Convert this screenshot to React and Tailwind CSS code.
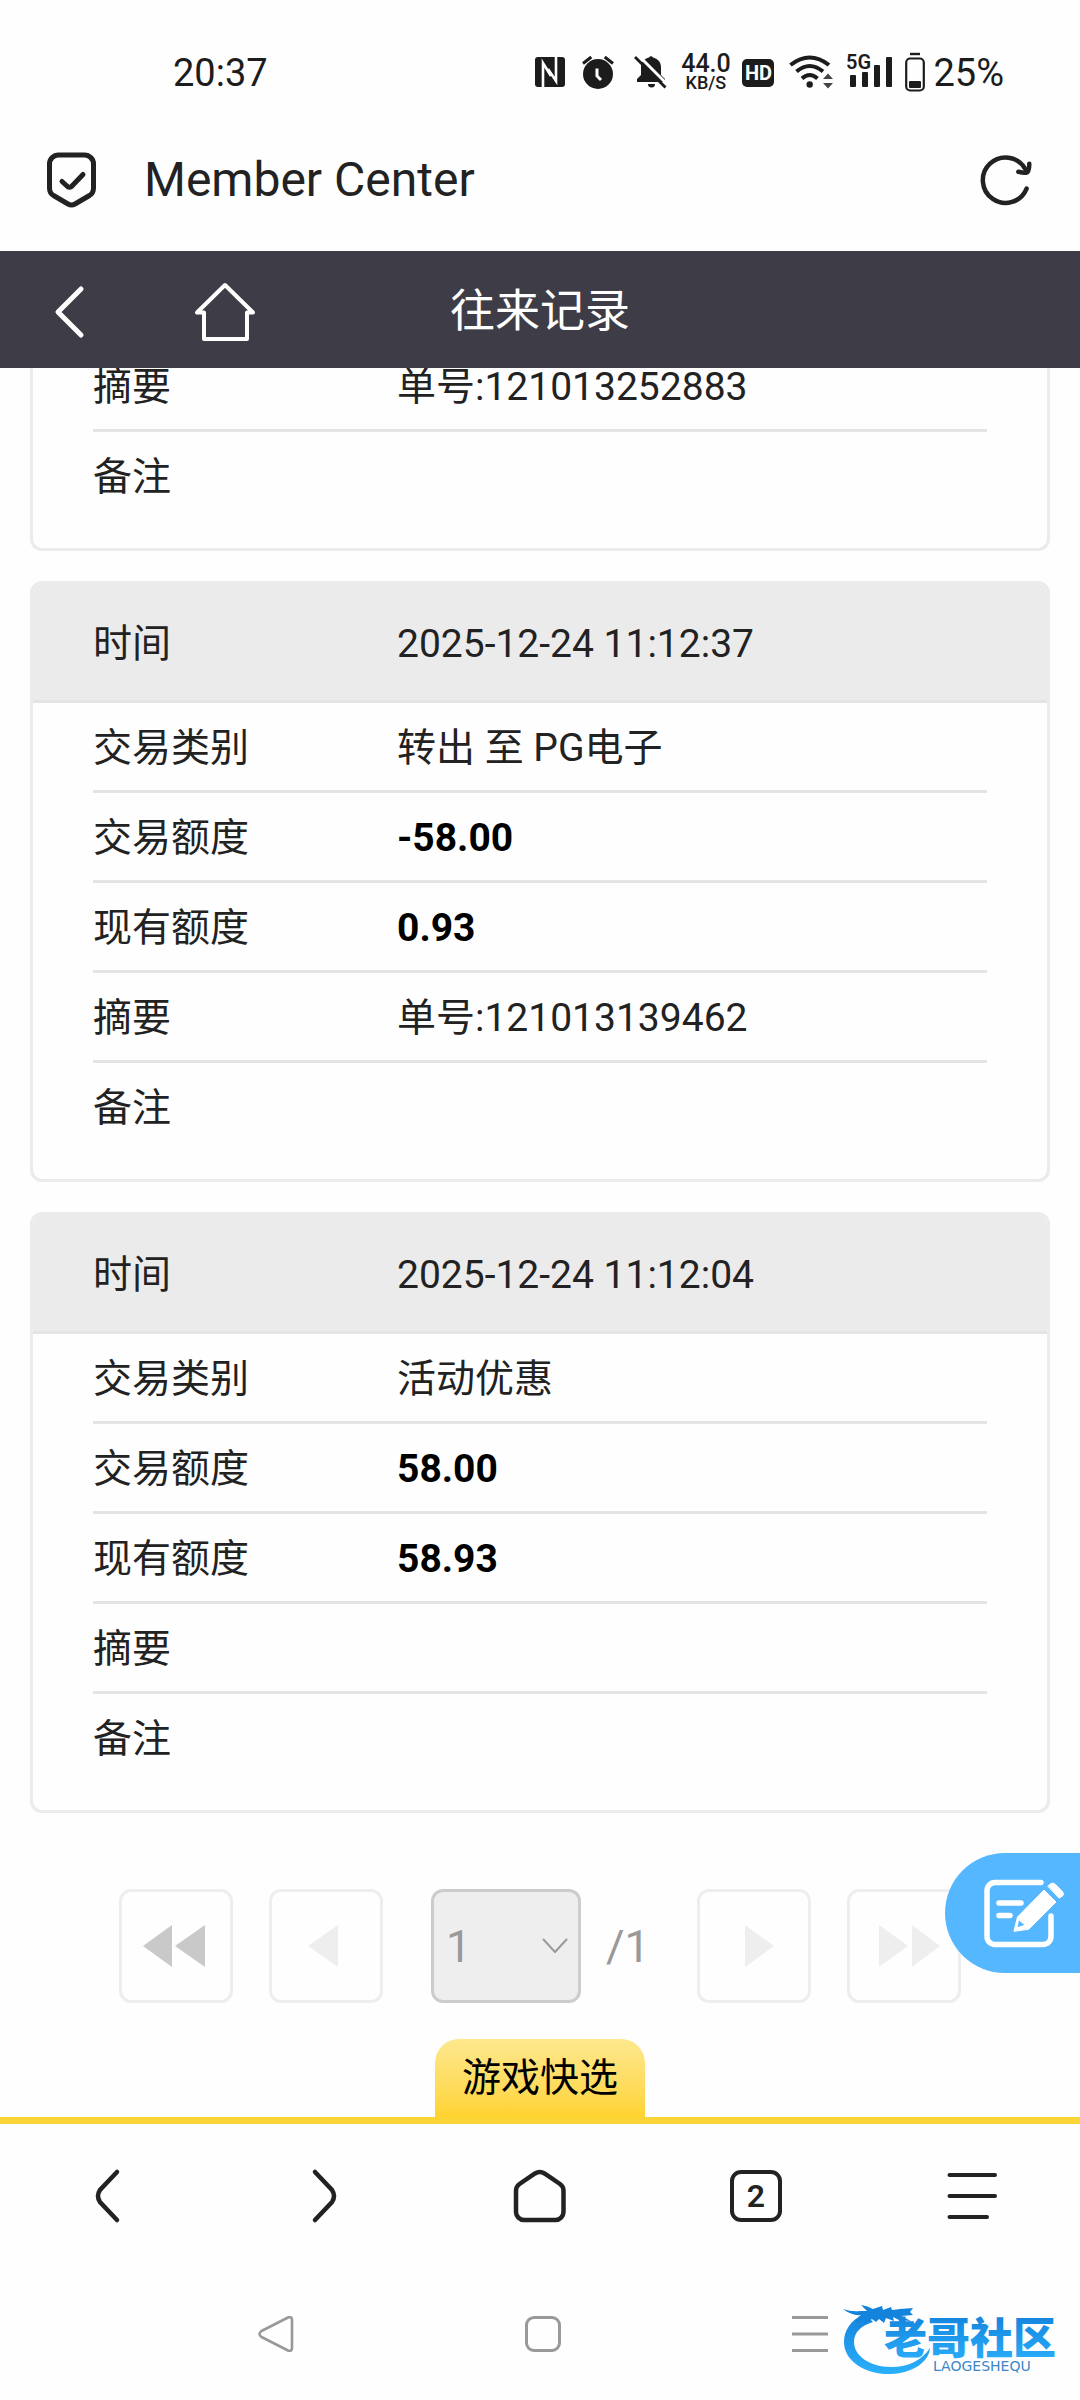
import React, { useState } from 'react';

const records = [
    { id: 1, rows: [{ label: '摘要', value: '单号:121013252883' }, { label: '备注', value: '' }] },
    {
        id: 2,
        time: '2025-12-24 11:12:37',
        rows: [
            { label: '交易类别', value: '转出 至 PG电子' },
            { label: '交易额度', value: '-58.00', bold: true },
            { label: '现有额度', value: '0.93', bold: true },
            { label: '摘要', value: '单号:121013139462' },
            { label: '备注', value: '' },
        ],
    },
    {
        id: 3,
        time: '2025-12-24 11:12:04',
        rows: [
            { label: '交易类别', value: '活动优惠' },
            { label: '交易额度', value: '58.00', bold: true },
            { label: '现有额度', value: '58.93', bold: true },
            { label: '摘要', value: '' },
            { label: '备注', value: '' },
        ],
    },
];

const StatusBar = () => (
    <div className="flex h-[108px] shrink-0 items-center justify-between pt-[38px] pl-[173px] pr-[76px] text-[38px] leading-none text-[#1c1c1c]">
        <span>20:37</span>
        <div className="flex items-center gap-3">
            {/* NFC */}
            <svg className="h-[44px] w-[34px]" viewBox="0 0 34 44" fill="none">
                <rect x="2" y="6" width="30" height="30" rx="3" fill="#1c1c1c" />
                <path d="M10 36V12L18 25M23 6v24l-8-12" stroke="#fff" strokeWidth="2.600" />
            </svg>
            {/* Alarm */}
            <svg className="h-[44px] w-[38px]" viewBox="0 0 38 44" fill="none" strokeWidth="3">
                <circle cx="19" cy="23" r="15" fill="#1c1c1c" />
                <path d="M4 12.500l8.300-6.500M34 12.500L25.700 6" stroke="#1c1c1c" />
                <path d="M18 17.500v7.500l4 4" stroke="#fff" />
            </svg>
            {/* Muted bell */}
            <svg className="h-[44px] w-[40px]" viewBox="0 0 40 44" fill="none">
                <path d="M8 31v-3l4-4v-8c0-5 3.500-8.500 8-9.500a2.300 2.300 0 0 1 4 0c4.500 1 8 4.500 8 9.500v8l4 4v3z" fill="#1c1c1c" />
                <path d="M19 33h7a3.500 3.500 0 0 1-7 0z" fill="#1c1c1c" />
                <path d="M9 4l31 31" stroke="#fff" strokeWidth="3" />
                <path d="M6 6l30.500 30.500" stroke="#1c1c1c" strokeWidth="2.800" />
            </svg>
            <div className="flex w-[49px] flex-col items-center font-medium">
                <span className="text-[25px] leading-[20px]">44.0</span>
                <span className="text-[18px] leading-[18px]">KB/S</span>
            </div>
            {/* HD */}
            <span className="flex h-[28px] w-[32px] items-center justify-center rounded-[5px] bg-[#1c1c1c] text-[20px] font-bold text-white">HD</span>
            {/* Wifi */}
            <svg className="h-[44px] w-[49px]" viewBox="0 0 49 44" fill="none" stroke="#1c1c1c" strokeWidth="4">
                <path d="M4.500 14Q23.700-1 43 14" />
                <path d="M10.500 20.500Q23.700 9.500 37 20.500" />
                <path d="M16 27.500Q23.700 20.500 31.500 27.500" />
                <circle cx="23.700" cy="33.500" r="3.200" fill="#1c1c1c" stroke="none" />
                <path d="M37 28l5-5.500 5 5.500zM37 32l5 5.500 5-5.500z" fill="#444" stroke="none" />
            </svg>
            {/* 5G signal */}
            <svg className="h-[44px] w-[46px]" viewBox="0 0 46 44" fill="#1c1c1c">
                <text x="-1" y="18" fontSize="20" fontWeight="600">5G</text>
                <rect x="3" y="24" width="6" height="12" rx="1" />
                <rect x="15" y="21" width="6" height="15" rx="1" />
                <rect x="27" y="14" width="6" height="22" rx="1" />
                <rect x="39" y="6" width="6" height="30" rx="1" />
            </svg>
            <div className="flex items-center gap-2">
                <svg className="h-[44px] w-[20px]" viewBox="0 0 20 44" fill="none">
                    <rect x="1.200" y="7.500" width="17.600" height="32" rx="4" stroke="#1c1c1c" strokeWidth="2.200" />
                    <path d="M5 3h10" stroke="#1c1c1c" strokeWidth="2.400" />
                    <rect x="4" y="30" width="12" height="7" rx="1" fill="#1c1c1c" />
                </svg>
                <span>25%</span>
            </div>
        </div>
    </div>
);

const BrowserBar = () => (
    <div className="flex h-[143px] shrink-0 items-center pl-[45px] pr-[45px] text-[#222]">
        <svg className="h-[60px] w-[54px]" viewBox="0 0 54 60" fill="none" stroke="currentColor" strokeWidth="5" strokeLinecap="round" strokeLinejoin="round">
            <path d="M13.500 5h26a9 9 0 0 1 9 9v24q0 5-4 7.500L30 54q-3.500 2-7 0L8.500 45.500q-4-2.500-4-7.500V14a9 9 0 0 1 9-9z" />
            <path d="M17 31.500l5.500 5q2 1.500 4 0L38 24.500" />
        </svg>
        <span className="ml-[45px] flex-1 text-[48px] leading-none">Member Center</span>
        <button aria-label="Reload">
            <svg className="block h-[60px] w-[60px]" viewBox="0 0 60 60" fill="none" stroke="currentColor" strokeWidth="4.500" strokeLinecap="round" strokeLinejoin="round">
                <path d="M51.600 38.700A22.700 22.700 0 1 1 50 18.500l2 3" />
                <path d="M54.300 13.700q0 8.500-3 9-3 .3-8-1" />
            </svg>
        </button>
    </div>
);

const PageHeader = () => (
    <header className="grid h-[117px] shrink-0 grid-cols-[1fr_auto_1fr] items-center bg-[#3e3d47] text-white">
        <div className="flex items-center gap-[103px] pl-[52px]">
            <button aria-label="返回">
                <svg className="block h-[60px] w-[36px]" viewBox="0 0 36 60" fill="none" stroke="currentColor" strokeWidth="5" strokeLinecap="round" strokeLinejoin="round">
                    <path d="M29 9L6 32l23 23" />
                </svg>
            </button>
            <a href="#home" aria-label="首页">
                <svg className="block h-[68px] w-[68px]" viewBox="0 0 68 68" fill="none" stroke="currentColor" strokeWidth="4" strokeLinejoin="round">
                    <path d="M34 9L6 36.500h7V63h43V36.500h6z" />
                </svg>
            </a>
        </div>
        <h1 className="pt-[3px] text-[45px] leading-none">往来记录</h1>
    </header>
);

const RecordCard = ({ record }) => (
    <dl className="overflow-hidden rounded-[12px] border-[3px] border-[#ebebeb] pb-[29px] text-[39px] leading-[44px] text-[#222]">
        {record.time && (
            <div className="flex h-[119px] items-center border-b-[3px] border-[#e4e4e4] bg-[#ebebeb] px-[60px] pt-[3px]">
                <dt className="w-[304px]">时间</dt>
                <dd>{record.time}</dd>
            </div>
        )}
        <div className="px-[60px]">
            {record.rows.map((row) => (
                <div key={row.label} className="flex h-[90px] items-center border-b-[3px] border-[#e4e4e4] pt-[3px] last:h-[87px] last:border-b-0">
                    <dt className="w-[304px]">{row.label}</dt>
                    <dd className={row.bold ? 'font-bold text-black' : ''}>{row.value}</dd>
                </div>
            ))}
        </div>
    </dl>
);

const PageButton = ({ label, dark, children }) => (
    <button
        aria-label={label}
        className={`flex h-[114px] w-[114px] items-center justify-center rounded-[12px] border-[3px] border-[#eee] ${dark ? 'text-[#c9c9c9]' : 'text-[#eee]'}`}
    >
        {children}
    </button>
);

const Pagination = () => {
    const [page, setPage] = useState('1');

    return (
        <nav className="mt-[76px] mb-[36px] flex items-center justify-center text-[45px] leading-none text-[#999]">
            <div className="flex gap-[36px]">
                <PageButton label="第一页" dark>
                    <svg className="h-[42px] w-[66px]" viewBox="0 0 66 42" fill="currentColor">
                        <path d="M0 21L29 0v42zM32 21L62 0v42z" />
                    </svg>
                </PageButton>
                <PageButton label="上一页">
                    <svg className="h-[42px] w-[36px]" viewBox="0 0 36 42" fill="currentColor">
                        <path d="M0 21L30 0v42z" />
                    </svg>
                </PageButton>
            </div>
            <div className="relative ml-[48px]">
                <select
                    aria-label="页码"
                    value={page}
                    onChange={(e) => setPage(e.target.value)}
                    className="block h-[114px] w-[150px] appearance-none rounded-[12px] border-[3px] border-[#ccc] bg-[#eee] pl-[12px]"
                >
                    <option value="1">1</option>
                </select>
                <svg className="pointer-events-none absolute top-[48px] right-[12px] h-[18px] w-[28px]" viewBox="0 0 28 18" fill="none" stroke="currentColor" strokeWidth="2">
                    <path d="M2 2l12 13L26 2" />
                </svg>
            </div>
            <span className="w-[116px] pl-[25px]">/1</span>
            <div className="flex gap-[36px]">
                <PageButton label="下一页">
                    <svg className="h-[42px] w-[40px]" viewBox="0 0 40 42" fill="currentColor">
                        <path d="M40 21L11 0v42z" />
                    </svg>
                </PageButton>
                <PageButton label="最后一页">
                    <svg className="h-[42px] w-[72px]" viewBox="0 0 72 42" fill="currentColor">
                        <path d="M40 21L11 0v42zM72 21L44 0v42z" />
                    </svg>
                </PageButton>
            </div>
        </nav>
    );
};

const BrowserNav = () => (
    <nav className="grid h-[144px] shrink-0 grid-cols-5 place-items-center text-[#222]">
        <button aria-label="Back">
            <svg className="block h-[60px] w-[60px]" viewBox="0 0 60 60" fill="none" stroke="currentColor" strokeWidth="4.500" strokeLinecap="round">
                <path d="M39 6L22 24Q18 30 22 36L39 54" />
            </svg>
        </button>
        <button aria-label="Forward">
            <svg className="block h-[60px] w-[60px]" viewBox="0 0 60 60" fill="none" stroke="currentColor" strokeWidth="4.500" strokeLinecap="round">
                <path d="M21 6L38 24Q42 30 38 36L21 54" />
            </svg>
        </button>
        <button aria-label="Home">
            <svg className="block h-[60px] w-[60px]" viewBox="0 0 60 60" fill="none" stroke="currentColor" strokeWidth="4.500">
                <path d="M25 7.500Q29.800 4.500 34.500 7.500L50 18Q53.500 20.500 53.500 24.500V46a8 8 0 0 1-8 8H14a8 8 0 0 1-8-8V24.500Q6 20.500 9.500 18z" />
            </svg>
        </button>
        <button className="flex h-[52px] w-[52px] items-center justify-center rounded-[11px] border-4 border-[#222] text-[32px] leading-none font-semibold">2</button>
        <button aria-label="Menu">
            <svg className="block h-[60px] w-[60px]" viewBox="0 0 60 60" fill="none" stroke="currentColor" strokeWidth="4" strokeLinecap="round">
                <path d="M7.500 9H53M7.500 30H53M7.500 51H45" />
            </svg>
        </button>
    </nav>
);

// Site logo: dragon ring with the name over it
const Watermark = () => (
    <svg className="absolute top-[34px] right-[9px] h-[84px] w-[228px]" viewBox="0 0 228 84">
        <defs>
            <linearGradient id="logo" x1="0" y1="0" x2="0" y2="1">
                <stop offset="0" stopColor="#1483dc" />
                <stop offset="1" stopColor="#2ab0fb" />
            </linearGradient>
        </defs>
        <path d="M22 12C7 18 1 29 1 40C1 60 24 73 48 72C70 71 86 60 87 46C79 58 66 65 48 65C27 65 11 54 11 40C11 31 17 24 30 20z" fill="url(#logo)" />
        <path d="M0 7q9 3 17 2l7 0-6-6q7 1 12 4l9-3 1 4 8-3 1 3 8-1 13-1-3 4 3 3-12 1 10 5-12-1-6-3 1 4-8-3-2 5-5-4-3 3-4-3-8 5 1-5-9 4q-2-3 5-8Q9 14 0 7z" fill="#1483dc" />
        <text x="41" y="52" fontSize="43" fontWeight="900" fill="url(#logo)">老哥社区</text>
        <text x="90" y="69" fontSize="14" fontFamily="DejaVu Sans, sans-serif" fill="#3d86c6">LAOGESHEQU</text>
    </svg>
);

const SystemNav = () => (
    <div className="relative grid h-[132px] shrink-0 grid-cols-3 place-items-center pl-[143px] pr-[137px] text-[#999]">
        <button aria-label="System back">
            <svg className="block h-[36px] w-[36px]" viewBox="0 0 36 36" fill="none" stroke="currentColor" strokeWidth="2.600" strokeLinejoin="round">
                <path d="M30 1.500Q34 0 34 4V32Q34 36 30 34.500L3.500 21Q-.5 18 3.500 15z" />
            </svg>
        </button>
        <button aria-label="System home" className="h-[36px] w-[36px] rounded-[9px] border-[3px] border-[#999]" />
        <button aria-label="Recent apps">
            <svg className="block h-[36px] w-[36px]" viewBox="0 0 36 36" stroke="currentColor" strokeWidth="3">
                <path d="M0 1.500h36M0 18h36M0 34.500h36" />
            </svg>
        </button>
        <Watermark />
    </div>
);

export default function App() {
    return (
        <div className="flex h-screen flex-col overflow-hidden bg-[#fefefe] font-[Roboto,'Noto_Sans_CJK_SC',sans-serif]">
            <StatusBar />
            <BrowserBar />
            <PageHeader />

            {/* Record list, scrolled to the end */}
            <main className="relative flex min-h-0 flex-1 flex-col justify-end overflow-hidden">
                <div className="flex flex-col gap-[30px] px-[30px]">
                    {records.map((record) => (
                        <RecordCard key={record.id} record={record} />
                    ))}
                </div>
                <Pagination />
                <div className="flex justify-center border-b-[7px] border-[#fbd436]">
                    <button className="h-[78px] w-[210px] rounded-t-[24px] bg-linear-to-b from-[#fde88d] to-[#ffd32c] text-[39px] leading-none text-black">
                        游戏快选
                    </button>
                </div>
                <button aria-label="反馈" className="absolute right-0 bottom-[151px] flex h-[120px] w-[135px] items-center rounded-l-full bg-[#55b7ff] pl-[37px]">
                    <svg className="h-[72px] w-[84px]" viewBox="0 0 84 72" fill="none" strokeLinecap="round" strokeLinejoin="round">
                        <path d="M59 5.500H13a8 8 0 0 0-8 8V59.500a8 8 0 0 0 8 8H61a8 8 0 0 0 8-8V39" stroke="#fff" strokeWidth="5.500" />
                        <path d="M17 26h22M17 38.500h11" stroke="#fff" strokeWidth="5.500" />
                        <path d="M32 54l3.500-14L62 13l12 12-27 27z" fill="#fff" stroke="#fff" strokeWidth="1" />
                        <path d="M66 9l3-2.500q2.500-1 4.500 1l7 7q1.500 2 .5 4L77.500 21z" fill="#fff" stroke="#fff" strokeWidth="1" />
                        <path d="M35.500 50l1.500-6.500 5.500 4.500z" fill="#55b7ff" />
                    </svg>
                </button>
            </main>

            <BrowserNav />
            <SystemNav />
        </div>
    );
}
